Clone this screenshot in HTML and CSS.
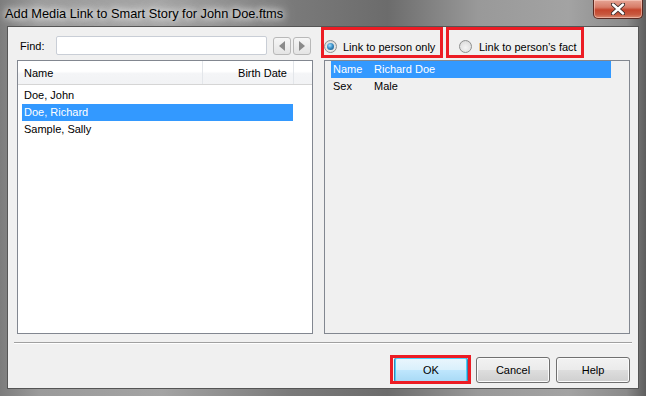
FILE: index.html
```html
<!DOCTYPE html>
<html lang="en">
<head>
  <meta charset="UTF-8">
  <title>Add Media Link to Smart Story</title>
  <link rel="stylesheet" href="styles.css">
</head>
<body>

<div class="window">
  <div class="titlebar">
    <span class="title">Add Media Link to Smart Story for John Doe.ftms</span>
    <button class="close-btn">
      <svg width="14" height="12" viewBox="0 0 14 12">
        <path d="M2 1.5 L12 10.5 M12 1.5 L2 10.5" stroke="#3a2a28" stroke-width="4.2" stroke-linecap="round"/>
        <path d="M2 1.5 L12 10.5 M12 1.5 L2 10.5" stroke="#ffffff" stroke-width="2.4" stroke-linecap="round"/>
      </svg>
    </button>
  </div>

  <div class="client">
    <div class="main">
      <div class="left-col">
        <div class="find-row">
          <label class="find-label">Find:</label>
          <input class="find-input" type="text">
          <button class="nav-btn"><span class="tri tri-left"></span></button>
          <button class="nav-btn"><span class="tri tri-right"></span></button>
        </div>
        <div class="list">
          <div class="list-header">
            <div class="col col-name">Name</div>
            <div class="col col-date">Birth Date</div>
            <div class="col col-rest"></div>
          </div>
          <div class="list-row">Doe, John</div>
          <div class="list-row selected">Doe, Richard</div>
          <div class="list-row">Sample, Sally</div>
        </div>
      </div>

      <div class="right-col">
        <div class="radio-row">
          <div class="mark-box box-only">
            <span class="radio checked"></span>
            <span class="radio-label">Link to person only</span>
          </div>
          <div class="mark-box box-fact">
            <span class="radio"></span>
            <span class="radio-label">Link to person’s fact</span>
          </div>
        </div>
        <div class="panel">
          <div class="panel-row selected">
            <span class="key">Name</span><span>Richard Doe</span>
          </div>
          <div class="panel-row">
            <span class="key">Sex</span><span>Male</span>
          </div>
        </div>
      </div>
    </div>

    <div class="separator"></div>

    <div class="buttons">
      <div class="ok-wrap">
        <button class="btn btn-default">OK</button>
        <div class="ok-mark"></div>
      </div>
      <button class="btn">Cancel</button>
      <button class="btn">Help</button>
    </div>
  </div>
</div>

</body>
</html>
```

FILE: styles.css
```css
body {
  margin: 0;
  padding: 0;
  font-family: "Liberation Sans", Arial, sans-serif;
  font-size: 11px;
  color: #000;
}

.window {
  width: 646px;
  height: 396px;
  background: linear-gradient(to right, #7c7c7c 0%, #9a9a9a 6%, #a4a4a4 25%, #7a7a7a 45%, #6c6c6c 60%, #999 74%, #a3a3a3 88%, #8a8a8a 97%, #5e5e5e 100%);
  display: flex;
  flex-direction: column;
}

.titlebar {
  height: 26px;
  display: flex;
  align-items: flex-start;
}

.title {
  margin-top: 6px;
  padding-left: 5px;
  font-size: 12.8px;
  line-height: 15px;
  text-shadow: 0 0 6px #fff, 0 0 10px rgba(255, 255, 255, 0.9), 0 0 16px rgba(255, 255, 255, 0.8);
}

.close-btn {
  margin-left: auto;
  margin-right: 3px;
  width: 50px;
  height: 19px;
  padding: 0;
  border: 1px solid #5a2a22;
  border-top: none;
  border-radius: 0 0 5px 5px;
  background: linear-gradient(#e6a595 0%, #d77c68 40%, #c4452c 55%, #c8583e 80%, #d98a6f 100%);
  box-shadow: inset 0 0 0 1px rgba(255, 220, 210, 0.5);
  display: flex;
  align-items: center;
  justify-content: center;
}

.client {
  margin: 0 7px;
  height: 361px;
  border: 1px solid #555;
  background: #f0f0f0;
}

.main {
  display: flex;
  padding-left: 9px;
  gap: 8px;
}

.left-col {
  width: 296px;
}

.find-row {
  display: flex;
  align-items: center;
  margin-top: 9px;
  height: 19px;
}

.find-label {
  width: 36px;
  padding-left: 3px;
}

.find-input {
  width: 211px;
  height: 19px;
  box-sizing: border-box;
  border: 1px solid #c9ced6;
  border-radius: 2px;
  background: #fff;
  margin: 0;
}

.nav-btn {
  width: 18px;
  height: 18px;
  padding: 0;
  margin-left: 6px;
  border: 1px solid #b8b8b8;
  border-radius: 3px;
  background: linear-gradient(#f6f6f6, #e4e4e4);
  display: flex;
  align-items: center;
  justify-content: center;
}

.nav-btn + .nav-btn {
  margin-left: 2px;
}

.tri {
  width: 0;
  height: 0;
  border-top: 5px solid transparent;
  border-bottom: 5px solid transparent;
}

.tri-left {
  border-right: 6px solid #8a8a8a;
}

.tri-right {
  border-left: 6px solid #8a8a8a;
}

.list {
  margin-top: 5px;
  height: 274px;
  box-sizing: border-box;
  border: 1px solid #828790;
  background: #fff;
}

.list-header {
  display: flex;
  height: 24px;
  box-sizing: border-box;
  border-bottom: 1px solid #d5d5d5;
  background: linear-gradient(#fff 0%, #fff 45%, #f4f5f7 55%, #f2f3f5 100%);
}

.col {
  display: flex;
  align-items: center;
  box-sizing: border-box;
  border-right: 1px solid #e3e6ea;
}

.col-name {
  width: 185px;
  padding-left: 6px;
}

.col-date {
  width: 91px;
  justify-content: flex-end;
  padding-right: 6px;
}

.col-rest {
  flex: 1;
  border-right: none;
}

.list-row {
  height: 17px;
  line-height: 17px;
  margin-left: 4px;
  width: 271px;
  padding-left: 2px;
  box-sizing: border-box;
}

.list-header + .list-row {
  margin-top: 2px;
}

.selected {
  background: #3399ff;
  color: #fff;
}

.right-col {
  width: 309px;
}

.radio-row {
  display: flex;
  gap: 3px;
  height: 31px;
}

.mark-box {
  box-sizing: border-box;
  height: 31px;
  border: 3px solid #ec1c24;
  display: flex;
  align-items: center;
  padding-top: 8px;
}

.box-only {
  width: 122px;
}

.box-fact {
  width: 138px;
  padding-left: 10px;
}

.radio {
  width: 13px;
  height: 13px;
  box-sizing: border-box;
  border-radius: 50%;
  border: 1px solid #8e8f8f;
  background: radial-gradient(circle at 50% 60%, #f4f4f4 0%, #e2e2e2 60%, #cfcfcf 100%);
  display: flex;
  align-items: center;
  justify-content: center;
}

.radio.checked::after {
  content: "";
  width: 7px;
  height: 7px;
  border-radius: 50%;
  background: radial-gradient(circle at 40% 35%, #a6e1ff 0%, #3a8fc8 45%, #174a72 100%);
}

.box-only .radio-label {
  margin-left: 6px;
}

.box-fact .radio-label {
  margin-left: 7px;
}

.panel {
  margin-top: 2px;
  margin-left: 3px;
  height: 274px;
  box-sizing: border-box;
  border: 1px solid #828790;
  background: #f0f0f0;
}

.panel-row {
  display: flex;
  height: 17px;
  line-height: 17px;
  margin-left: 6px;
  width: 280px;
  padding-left: 2px;
  box-sizing: border-box;
}

.key {
  width: 41px;
}

.separator {
  margin: 8px 6px 0 6px;
  border-top: 1px solid #a0a0a0;
  border-bottom: 1px solid #fff;
}

.buttons {
  display: flex;
  justify-content: flex-end;
  gap: 6px;
  margin-top: 13px;
  padding-right: 8px;
}

.btn {
  width: 74px;
  height: 26px;
  margin: 0;
  padding: 0;
  font-family: "Liberation Sans", Arial, sans-serif;
  font-size: 11px;
  color: #000;
  border: 1px solid #707070;
  border-radius: 3px;
  background: linear-gradient(#f2f2f2 0%, #ebebeb 48%, #dddddd 52%, #cfcfcf 100%);
  box-shadow: inset 0 0 0 1px #fbfbfb;
}

.btn-default {
  border-color: #3c7fb1;
  background: linear-gradient(#eaf6fd 0%, #d9f0fc 48%, #bee6fd 52%, #a7d9f5 100%);
  box-shadow: inset 0 0 0 1px #48d3fb;
}

.ok-wrap {
  position: relative;
  margin-right: 2px;
}

.ok-mark {
  position: absolute;
  top: -2px;
  bottom: -1px;
  left: -4px;
  right: -3px;
  border: 3px solid #ec1c24;
}
```
